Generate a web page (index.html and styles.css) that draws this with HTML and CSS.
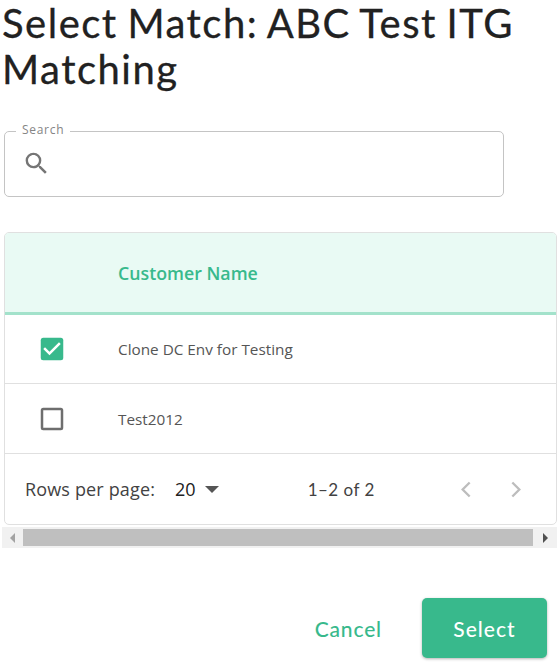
FILE: index.html
```html
<!DOCTYPE html>
<html lang="en">
<head>
<meta charset="utf-8">
<title>Select Match</title>
<link rel="stylesheet" href="styles.css">
</head>
<body>
<main class="dialog">
  <h1 class="title">Select Match: ABC Test ITG Matching</h1>
  <fieldset class="search">
    <legend class="search-legend">Search</legend>
    <svg class="search-icon" viewBox="0 0 24 24" width="29" height="29"><path fill="#757575" d="M15.5 14h-.79l-.28-.27A6.47 6.47 0 0 0 16 9.5 6.5 6.5 0 1 0 9.5 16c1.61 0 3.09-.59 4.23-1.57l.27.28v.79l5 4.99L20.49 19l-4.99-5zm-6 0C7.01 14 5 11.99 5 9.5S7.01 5 9.5 5 14 7.01 14 9.5 11.99 14 9.5 14z"/></svg>
  </fieldset>
  <section class="table-wrap">
    <div class="card">
      <div class="row head"><span class="check-cell"></span><span class="head-name">Customer Name</span></div>
      <div class="row body-row first-row">
        <span class="check-cell"><svg class="box" viewBox="0 0 24 24" width="30" height="30"><path fill="#38b98c" d="M19 3H5a2 2 0 0 0-2 2v14a2 2 0 0 0 2 2h14a2 2 0 0 0 2-2V5a2 2 0 0 0-2-2z"/><path fill="#fff" d="M10 17l-5-5 1.41-1.41L10 14.17l7.59-7.59L19 8l-9 9z"/></svg></span>
        <span class="cell-name">Clone DC Env for Testing</span>
      </div>
      <div class="row body-row">
        <span class="check-cell"><svg class="box" viewBox="0 0 24 24" width="30" height="30"><path fill="#6e6e6e" d="M19 5v14H5V5h14m0-2H5a2 2 0 0 0-2 2v14a2 2 0 0 0 2 2h14a2 2 0 0 0 2-2V5a2 2 0 0 0-2-2z"/></svg></span>
        <span class="cell-name">Test2012</span>
      </div>
      <div class="pager">
        <span class="rows-label">Rows per page:</span>
        <span class="rows-value">20</span>
        <svg class="rows-caret" viewBox="0 0 14 7" width="14" height="7"><path fill="#555" d="M0 0h14L7 7z"/></svg>
        <span class="range">1–2 of 2</span>
        <svg class="nav nav-prev" viewBox="0 0 12 16" width="14" height="19"><path fill="none" stroke="#bdbdbd" stroke-width="2" d="M10 2 4 8l6 6"/></svg>
        <svg class="nav nav-next" viewBox="0 0 12 16" width="14" height="19"><path fill="none" stroke="#bdbdbd" stroke-width="2" d="M2 2l6 6-6 6"/></svg>
      </div>
    </div>
    <div class="scrollbar">
      <span class="scroll-btn scroll-btn-left"><span class="arrow arrow-left"></span></span>
      <span class="thumb"></span>
      <span class="scroll-btn scroll-btn-right"><span class="arrow arrow-right"></span></span>
    </div>
  </section>
  <footer class="actions">
    <button class="btn-cancel" type="button">Cancel</button>
    <button class="btn-select" type="button">Select</button>
  </footer>
</main>
</body>
</html>
```
FILE: styles.css
```css
* { box-sizing: border-box; }
html, body { margin: 0; padding: 0; background: #fff; overflow: hidden; }
body { width: 557px; height: 665px; font-family: "Open Sans", sans-serif; }
.dialog { display: flex; flex-direction: column; }
.title {
  margin: 0 0 0 2px;
  font: 400 40px/46px Lato, sans-serif;
  color: #212121;
  letter-spacing: 1.5px;
  word-spacing: -2px;
  -webkit-text-stroke: .3px #212121;
}
.search {
  margin: 33px 0 0 4px;
  width: 500px;
  height: 72px;
  padding: 0 0 0 17px;
  border: 1px solid #c4c4c4;
  border-radius: 5px;
  display: flex;
  align-items: flex-start;
}
.search-legend {
  padding: 0 6px 2px;
  margin-left: -6px;
  font-size: 12px;
  line-height: 10px;
  color: #858585;
  letter-spacing: .7px;
}
.search-icon { display: block; margin-top: 12px; }
.table-wrap { margin-top: 35px; }
.card {
  margin-left: 4px;
  width: 553px;
  border: 1px solid #e0e0e0;
  border-radius: 5px;
  overflow: hidden;
}
.row { display: flex; align-items: center; }
.head {
  height: 82px;
  background: #e9faf4;
  border-bottom: 3px solid #a3e2cb;
}
.body-row { height: 70px; border-bottom: 1px solid #e0e0e0; }
.first-row { height: 69px; }
.check-cell { width: 113px; padding-left: 32px; display: flex; align-items: center; }
.box { display: block; }
.head-name { font-size: 17.75px; font-weight: 600; color: #38b98c; }
.cell-name { font-size: 15.3px; color: #555; }
.pager { height: 70px; display: flex; align-items: center; color: #424242; }
.rows-label { margin-left: 20px; font-size: 18px; letter-spacing: .15px; }
.rows-value { margin-left: 20px; font-size: 18px; color: #212121; }
.rows-caret { margin-left: 9px; }
.range { margin-left: 89px; font: 400 17px Lato, sans-serif; letter-spacing: .5px; }
.nav { flex: none; }
.nav-prev { margin-left: 83px; }
.nav-next { margin-left: 38px; }
.scrollbar {
  margin: 2px 0 0 2px;
  width: 555px;
  height: 21px;
  background: #f1f1f1;
  display: flex;
  align-items: center;
}
.scroll-btn { display: flex; align-items: center; justify-content: center; }
.scroll-btn-left { width: 21px; }
.scroll-btn-right { width: 24px; }
.thumb { flex: none; width: 510px; height: 17px; background: #bfbfbf; }
.arrow { width: 0; height: 0; border-top: 5px solid transparent; border-bottom: 5px solid transparent; }
.arrow-left { border-right: 5px solid #a3a3a3; }
.arrow-right { border-left: 5px solid #505050; }
.actions {
  margin-top: 50px;
  display: flex;
  align-items: center;
  justify-content: flex-end;
  padding-right: 10px;
}
.btn-cancel {
  border: 0;
  background: none;
  padding: 0;
  margin-right: 40px;
  font: 500 21px Lato, sans-serif;
  letter-spacing: .85px;
  color: #38b98c;
}
.btn-select {
  width: 125px;
  height: 60px;
  border: 0;
  border-radius: 5px;
  background: #38b98c;
  color: #fff;
  font: 500 21px Lato, sans-serif;
  letter-spacing: 1px;
  box-shadow: 0 1px 3px rgba(0,0,0,.3);
}
```
